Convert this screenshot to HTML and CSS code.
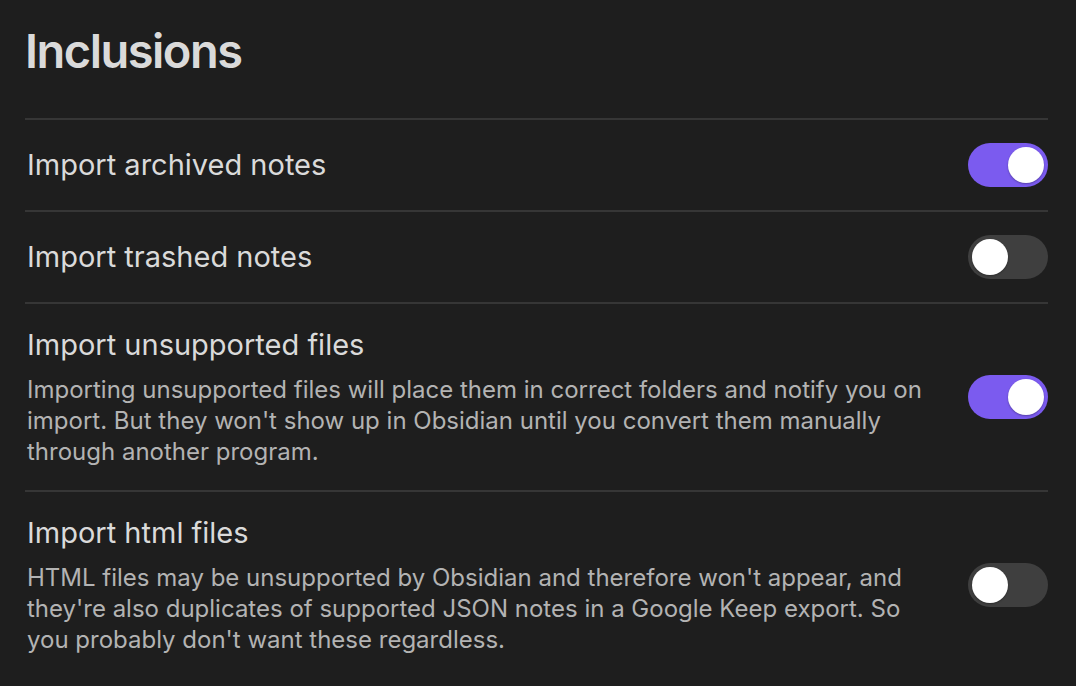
FILE: index.html
```html
<!DOCTYPE html>
<html>
<head>
<meta charset="utf-8">
<link rel="stylesheet" href="styles.css">
</head>
<body>
<div class="settings">
  <div class="heading">Inclusions</div>
  <div class="item">
    <div class="info">
      <div class="name">Import archived notes</div>
    </div>
    <div class="toggle on"><div class="knob"></div></div>
  </div>
  <div class="item">
    <div class="info">
      <div class="name">Import trashed notes</div>
    </div>
    <div class="toggle"><div class="knob"></div></div>
  </div>
  <div class="item">
    <div class="info">
      <div class="name">Import unsupported files</div>
      <div class="desc">Importing unsupported files will place them in correct folders and notify you on import. But they won't show up in Obsidian until you convert them manually through another program.</div>
    </div>
    <div class="toggle on"><div class="knob"></div></div>
  </div>
  <div class="item">
    <div class="info">
      <div class="name">Import html files</div>
      <div class="desc">HTML files may be unsupported by Obsidian and therefore won't appear, and they're also duplicates of supported JSON notes in a Google Keep export. So you probably don't want these regardless.</div>
    </div>
    <div class="toggle"><div class="knob"></div></div>
  </div>
</div>
</body>
</html>
```
FILE: styles.css
```css
html, body {
  margin: 0;
  padding: 0;
  background: #1e1e1e;
  height: 100%;
  overflow: hidden;
}
body {
  font-family: Inter, "Liberation Sans", sans-serif;
  color: #dadada;
}
.settings {
  padding: 22px 28px 0 25px;
}
.heading {
  font-size: 47px;
  font-weight: 600;
  line-height: 58px;
  margin-bottom: 38px;
  color: #dadada;
  letter-spacing: -1.5px;
}
.item {
  display: flex;
  align-items: center;
  border-top: 2px solid #363636;
  padding: 23px 0 23px;
}
.info {
  flex: 1 1 auto;
  margin-right: 32px;
}
.name {
  font-size: 29px;
  line-height: 36px;
  color: #dadada;
  padding-left: 2px;
}
.desc {
  font-size: 24px;
  line-height: 31.2px;
  color: #b3b3b3;
  padding-left: 2px;
  padding-top: 10.5px;
}
.toggle {
  flex: 0 0 auto;
  width: 80px;
  height: 44px;
  border-radius: 22px;
  background: #3f3f3f;
  display: flex;
  align-items: center;
  padding: 0 4px;
  box-sizing: border-box;
}
.toggle.on {
  background: #7b5bef;
  justify-content: flex-end;
}
.knob {
  width: 36px;
  height: 36px;
  border-radius: 50%;
  background: #ffffff;
  box-shadow: 0 1px 2px rgba(0,0,0,0.3);
}
```
